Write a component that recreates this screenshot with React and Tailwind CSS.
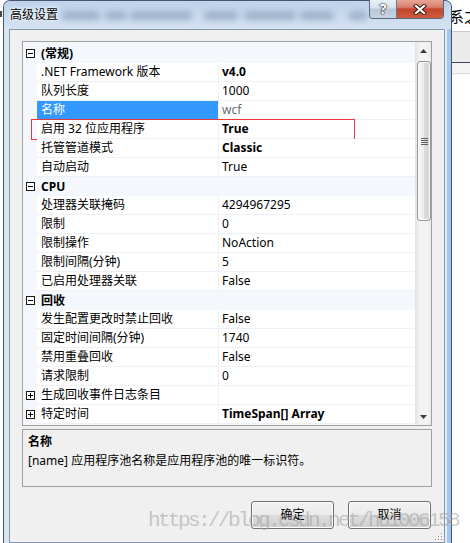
const rows = [
  { cat: '(常规)' },
  { label: '.NET Framework 版本', value: 'v4.0', bold: true },
  { label: '队列长度', value: '1000' },
  { label: '名称', value: 'wcf', selected: true, readonly: true },
  { label: '启用 32 位应用程序', value: 'True', bold: true, marked: true },
  { label: '托管管道模式', value: 'Classic', bold: true },
  { label: '自动启动', value: 'True' },
  { cat: 'CPU' },
  { label: '处理器关联掩码', value: '4294967295' },
  { label: '限制', value: '0' },
  { label: '限制操作', value: 'NoAction' },
  { label: '限制间隔(分钟)', value: '5' },
  { label: '已启用处理器关联', value: 'False' },
  { cat: '回收' },
  { label: '发生配置更改时禁止回收', value: 'False' },
  { label: '固定时间间隔(分钟)', value: '1740' },
  { label: '禁用重叠回收', value: 'False' },
  { label: '请求限制', value: '0' },
  { label: '生成回收事件日志条目', value: '', expand: true },
  { label: '特定时间', value: 'TimeSpan[] Array', bold: true, expand: true },
]

// little +/- box in the left gutter
function ToggleBox({ plus }) {
  return (
    <svg width="9" height="9" viewBox="0 0 9 9" className="block">
      <rect x="0.5" y="0.5" width="8" height="8" fill="#fff" stroke="#1a1a1a" />
      <path d="M2 4.5h5" stroke="#000" />
      {plus && <path d="M4.5 2v5" stroke="#000" />}
    </svg>
  )
}

function GridRow({ row }) {
  if (row.cat) {
    return (
      <div className="flex h-[19px] items-center">
        <div className="w-[14px] pl-[3px]">
          <ToggleBox />
        </div>
        <div className="pl-[4px] font-bold">{row.cat}</div>
      </div>
    )
  }

  return (
    <div className="relative flex h-[19px]">
      <div className="w-[14px] flex items-center pl-[3px]">{row.expand && <ToggleBox plus />}</div>
      <div
        className={`w-[181px] flex items-center pl-[4px] border-b border-[#edf0f5] whitespace-nowrap ${
          row.selected ? 'bg-[#3399ff] text-white' : 'bg-white'
        }`}
      >
        {row.label}
      </div>
      <div className="w-[1px] bg-[#edf0f5]" />
      <div
        className={`flex-1 flex items-center pl-[3px] bg-white border-b border-[#edf0f5] whitespace-nowrap ${
          row.bold ? 'font-bold' : ''
        } ${row.readonly ? 'text-[#6d6d6d]' : ''}`}
      >
        {row.value}
      </div>
      {row.marked && (
        <div className="absolute left-[8px] top-[-1px] w-[324px] h-[21px] border border-[#e8383d]" />
      )}
    </div>
  )
}

function Arrow({ down }) {
  return (
    <svg width="7" height="4" viewBox="0 0 7 4" className="block">
      <path d={down ? 'M0 0h7L3.5 4z' : 'M0 4h7L3.5 0z'} fill="#3a3a3a" />
    </svg>
  )
}

function Scrollbar() {
  return (
    <div className="w-[16px] flex flex-col border-l border-[#e4e4e4] bg-[linear-gradient(to_right,#e6e6e6,#f3f3f3_25%,#f3f3f3_75%,#ebebeb)]">
      <div className="h-[17px] flex items-center justify-center">
        <Arrow />
      </div>
      <div className="mt-[2px] ml-[1px] w-[14px] h-[160px] flex items-center justify-center rounded-[3px] border border-[#979797] bg-[linear-gradient(to_right,#f7f7f7,#ececec_50%,#dcdcdc_51%,#d2d2d2)] shadow-[inset_0_0_0_1px_#fbfbfb]">
        <div className="flex flex-col gap-[1px]">
          <div className="w-[7px] h-[1px] bg-[#5f5f5f]" />
          <div className="w-[7px] h-[1px] bg-[#5f5f5f]" />
          <div className="w-[7px] h-[1px] bg-[#5f5f5f]" />
          <div className="w-[7px] h-[1px] bg-[#5f5f5f]" />
        </div>
      </div>
      <div className="flex-1" />
      <div className="h-[17px] flex items-center justify-center">
        <Arrow down />
      </div>
    </div>
  )
}

function DialogButton({ children }) {
  return (
    <button
      type="button"
      className="w-[83px] h-[28px] rounded-[3px] border border-[#707070] bg-[linear-gradient(#f2f2f2,#ebebeb_48%,#dddddd_52%,#cfcfcf)] shadow-[inset_0_0_0_1px_#fcfcfc] text-[12px] text-black"
    >
      {children}
    </button>
  )
}

function CaptionButtons() {
  return (
    <div className="ml-auto mr-[7px] -mt-px flex h-[19px] self-start rounded-b-[4px] border border-t-0 border-[#56667b] overflow-hidden">
      <div className="w-[27px] flex items-center justify-center border-r border-[#6b7a8d] bg-[linear-gradient(#e9eff6,#d6e0eb_45%,#b8c7d8_50%,#c6d3e2)]">
        <span className="font-bold text-[14px] leading-none text-white [text-shadow:0_0_1px_#222,0_0_1px_#222,0_0_2px_#333]">?</span>
      </div>
      <div className="w-[46px] flex items-center justify-center bg-[linear-gradient(#e8a595,#d8806c_40%,#c4452f_50%,#cf5b3d)]">
        <svg width="14" height="11" viewBox="0 0 14 11">
          <path d="M3 2l8 7M11 2l-8 7" stroke="#3d1b14" strokeWidth="4.2" strokeLinecap="square" />
          <path d="M3 2l8 7M11 2l-8 7" stroke="#fff" strokeWidth="2.2" strokeLinecap="square" />
        </svg>
      </div>
    </div>
  )
}

function TitleBar() {
  // blurred page text seen through the glass
  const blobs = [
    ['ml-[4px]', 'w-[38px]'],
    ['ml-[5px]', 'w-[22px]'],
    ['ml-[3px]', 'w-[62px]'],
    ['ml-[12px]', 'w-[34px]'],
    ['ml-[6px]', 'w-[52px]'],
    ['ml-[4px]', 'w-[34px]'],
    ['ml-[15px]', 'w-[18px]'],
  ]
  return (
    <div className="h-[28px] flex items-center pl-[6px] rounded-t-[6px] bg-[linear-gradient(#bdd3eb,#cadcef_60%,#d5e3f1)]">
      <span className="relative z-10 text-[12px] text-black [text-shadow:0_0_5px_#fff,0_0_3px_#fff]">高级设置</span>
      {blobs.map(([ml, w], i) => (
        <span key={i} className={`${ml} ${w} h-[9px] mt-[1px] rounded-[4px] bg-[#93a8c0] opacity-80 blur-[3px]`} />
      ))}
      <CaptionButtons />
    </div>
  )
}

function ResizeGrip() {
  return (
    <svg width="8" height="8" viewBox="0 0 8 8" className="absolute right-[1px] bottom-[1px]">
      {[
        [6, 0],
        [3, 3],
        [6, 3],
        [0, 6],
        [3, 6],
        [6, 6],
      ].map(([x, y]) => (
        <g key={`${x}-${y}`}>
          <rect x={x + 1} y={y + 1} width="1" height="1" fill="#fff" />
          <rect x={x} y={y} width="1" height="1" fill="#8a8a8a" />
        </g>
      ))}
    </svg>
  )
}

function Client() {
  return (
    <div className="relative w-[436px] flex flex-col border border-[#8796a8] bg-[#f0f0f0] px-[12px] pt-[11px]">
      <div className="h-[385px] flex border border-[#a0a0a0] bg-[#f4f7fc]">
        <div className="w-[392px] pt-[2px]">
          {rows.map((row, i) => (
            <GridRow key={i} row={row} />
          ))}
        </div>
        <Scrollbar />
      </div>

      <div className="mt-[3px] h-[58px] border border-[#a0a0a0] px-[5px] pt-[2px] leading-[19px]">
        <div className="font-bold">名称</div>
        <div>[name] 应用程序池名称是应用程序池的唯一标识符。</div>
      </div>

      <div className="mt-[14px] flex justify-end gap-[14px] pr-[1px]">
        <DialogButton>确定</DialogButton>
        <DialogButton>取消</DialogButton>
      </div>

      <ResizeGrip />
    </div>
  )
}

export default function App() {
  return (
    <div className="relative w-[470px] h-[543px] overflow-hidden flex bg-white text-[12px] text-black font-['Noto_Sans','Noto_Sans_CJK_SC',sans-serif]">
      {/* page behind the dialog */}
      <div className="w-[3px] shrink-0 bg-white pt-[11px]">
        <div className="w-[2px] h-[6px] bg-[#4a4a4a]" />
      </div>

      <div className="w-[449px] shrink-0 flex flex-col border border-b-0 border-[#47566a] rounded-t-[7px] bg-[#d8e3ef]">
        <TitleBar />
        <div className="flex flex-1">
          <div className="w-[5px] bg-[#dbe5ef]" />
          <Client />
          <div className="w-[6px] border-l-2 border-[#e4edf6] bg-[#a3c6ec]" />
        </div>
      </div>

      <div className="flex-1 flex flex-col overflow-hidden">
        <div className="h-[31px] pt-[5px] bg-white whitespace-nowrap">
          <span className="-ml-[3px] text-[15px] font-['Noto_Sans_CJK_SC',sans-serif]">系之</span>
        </div>
        <div className="h-[1px] bg-[#c9c9c9]" />
        <div className="h-[30px] bg-[#ebebeb]" />
        <div className="h-[1px] bg-[#43435a]" />
        <div className="h-[10px] bg-[#f3f3f3]" />
        <div className="h-[1px] bg-[#dadada]" />
        <div className="flex-1 bg-white" />
      </div>

      {/* blog watermark over the buttons */}
      <div className="absolute left-[148px] top-[510px] text-[21px] tracking-[-2.6px] leading-none whitespace-nowrap text-[rgba(160,160,160,0.55)] font-['Liberation_Mono',monospace] pointer-events-none">
        https://blog.csdn.net/hu1006158
      </div>
    </div>
  )
}
